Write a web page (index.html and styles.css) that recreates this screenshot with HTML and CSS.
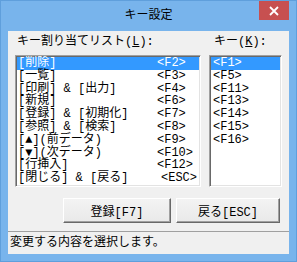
FILE: index.html
```html
<!DOCTYPE html>
<html lang="ja">

<head>
    <meta charset="UTF-8">
    <meta name="viewport" content="width=device-width, initial-scale=1.0">
    <title>キー設定</title>
    <link rel="stylesheet" href="styles.css">
</head>

<body>
<div class="window">
    <div class="titlebar">
        <span></span>
        <span class="title">キー設定</span>
        <button class="close" type="button" aria-label="閉じる">
            <svg width="10" height="10" viewBox="0 0 10 10">
                <path d="M1 1L9 9M9 1L1 9" stroke="#fff" stroke-width="1.8" fill="none"/>
            </svg>
        </button>
    </div>
    <div class="client">
        <div class="panes">
            <div class="pane">
                <div class="caption cap-list">キー割り当てリスト(<u>L</u>):</div>
                <div class="listbox cmd-list">
                    <div class="row sel"><span>[削除]</span><span>&lt;F2&gt;</span></div>
                    <div class="row"><span>[一覧]</span><span>&lt;F3&gt;</span></div>
                    <div class="row"><span>[印刷] &amp; [出力]</span><span>&lt;F4&gt;</span></div>
                    <div class="row"><span>[新規]</span><span>&lt;F6&gt;</span></div>
                    <div class="row"><span>[登録] &amp; [初期化]</span><span>&lt;F7&gt;</span></div>
                    <div class="row"><span>[参照] &amp; [検索]</span><span>&lt;F8&gt;</span></div>
                    <div class="row"><span>[▲](前データ)</span><span>&lt;F9&gt;</span></div>
                    <div class="row"><span>[▼](次データ)</span><span>&lt;F10&gt;</span></div>
                    <div class="row"><span>[行挿入]</span><span>&lt;F12&gt;</span></div>
                    <div class="row"><span>[閉じる] &amp; [戻る]</span><span class="late">&lt;ESC&gt;</span></div>
                </div>
            </div>
            <div class="pane">
                <div class="caption cap-key">キー(<u>K</u>):</div>
                <div class="listbox key-list">
                    <div class="row sel">&lt;F1&gt;</div>
                    <div class="row">&lt;F5&gt;</div>
                    <div class="row">&lt;F11&gt;</div>
                    <div class="row">&lt;F13&gt;</div>
                    <div class="row">&lt;F14&gt;</div>
                    <div class="row">&lt;F15&gt;</div>
                    <div class="row">&lt;F16&gt;</div>
                </div>
            </div>
        </div>
        <div class="buttons">
            <button type="button" class="btn btn-save">登録[F7]</button>
            <button type="button" class="btn btn-back">戻る[ESC]</button>
        </div>
        <div class="status">変更する内容を選択します。</div>
    </div>
</div>
</body>

</html>
```

FILE: styles.css
```css
body {
    margin: 0;
    padding: 0;
    font-family: "Liberation Mono", "Noto Sans CJK JP", monospace;
    font-size: 12px;
    color: #000
}

.window {
    box-sizing: border-box;
    width: 297px;
    height: 262px;
    display: flex;
    flex-direction: column;
    background: #78b4ec;
    border: 1px solid #5f9fdc;
    padding: 0 7px 7px
}

.titlebar {
    height: 30px;
    display: grid;
    grid-template-columns: 1fr auto 1fr;
    align-items: start
}

.title {
    line-height: 30px
}

.close {
    justify-self: end;
    width: 30px;
    height: 19px;
    border: none;
    padding: 0;
    background: #c75050;
    display: flex;
    align-items: center;
    justify-content: center
}

.client {
    flex: 1;
    display: flex;
    flex-direction: column;
    background: #f0f0f0
}

.panes {
    display: grid;
    grid-template-columns: 186px 73px;
    column-gap: 8px;
    padding: 4px 0 0 7px
}

.caption {
    line-height: 14px;
    margin-bottom: 6px;
    white-space: nowrap
}

.cap-list {
    padding-left: 2px
}

.cap-key {
    padding-left: 5px
}

.listbox {
    box-sizing: border-box;
    height: 132px;
    background: #fff;
    border: 1px solid;
    border-color: #a0a0a0 #fff #fff #a0a0a0;
    box-shadow: inset 1px 1px #696969, inset -1px -1px #e3e3e3;
    padding: 1px;
    overflow: hidden
}

.row {
    line-height: 12.8px;
    height: 12.8px;
    white-space: nowrap
}

.cmd-list .row {
    display: grid;
    grid-template-columns: 139px auto;
    padding-left: 1px
}

.key-list .row {
    padding-left: 2px
}

.row.sel {
    background: #3399ff;
    color: #fff
}

.late {
    margin-left: 4px
}

.buttons {
    display: flex;
    justify-content: flex-end;
    gap: 5px;
    margin-top: 11px;
    padding-right: 9px
}

.btn {
    box-sizing: border-box;
    height: 25px;
    font: inherit;
    color: #000;
    background: linear-gradient(#f3f3f3, #e9e9e9);
    border: 1px solid;
    border-color: #fff #696969 #696969 #fff;
    box-shadow: inset -1px -1px #a0a0a0;
    padding: 0
}

.btn-save {
    width: 108px
}

.btn-back {
    width: 104px
}

.status {
    flex: 1;
    margin-top: 8px;
    border-top: 1px solid #a0a0a0;
    padding: 3px 2px;
    line-height: 16px
}
```
